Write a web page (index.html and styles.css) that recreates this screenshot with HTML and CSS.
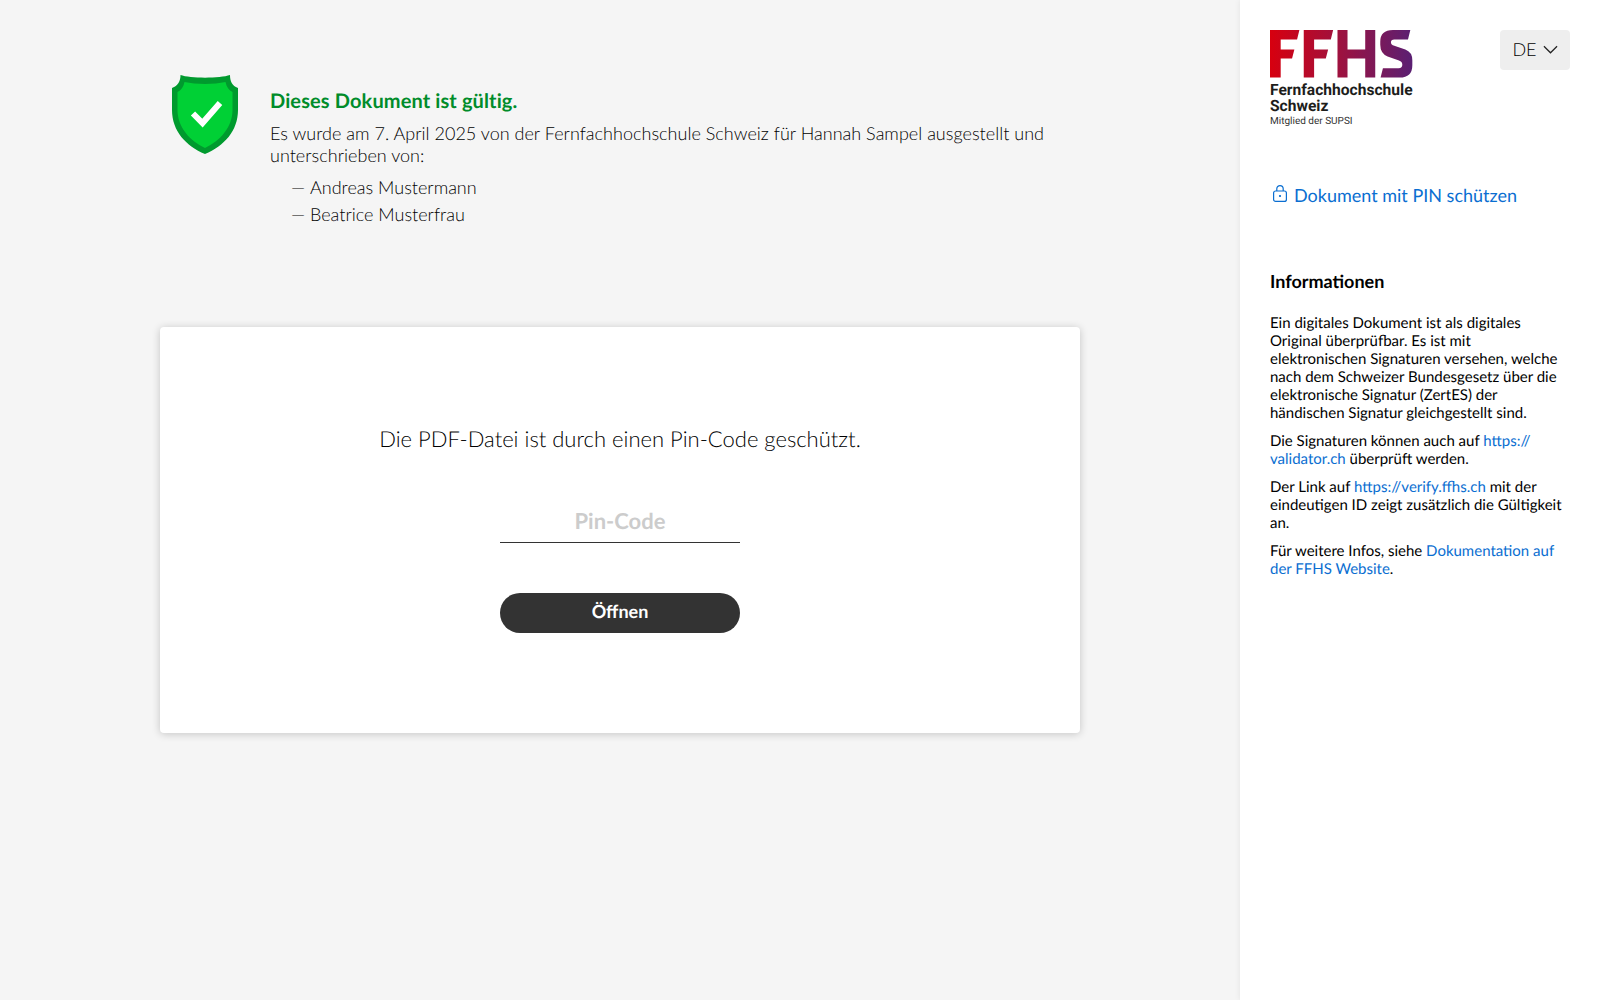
FILE: index.html
```html
<!DOCTYPE html>
<html lang="de">
<head>
<meta charset="utf-8">
<title>FFHS Verify</title>
<link rel="stylesheet" href="styles.css">
</head>
<body>
<main class="main">
  <section class="status">
    <svg class="shield" viewBox="0 0 66 79" aria-hidden="true">
      <path class="shield-outer" d="M8.500 0 C18 3.500 48 3.500 58 0 C58 6 60 11 66 13 L66 35 C66 56 52 71 33 79 C14 71 0 56 0 35 L0 13 C6 11 8.500 6 8.500 0 Z"/>
      <path class="shield-inner" d="M12.500 7 C24 9.500 42 9.500 53.500 7 C54.500 12 57 15.500 60.500 17 L60.500 35 C60.500 52 48 66 33 73 C18 66 5.500 52 5.500 35 L5.500 17 C9 15.500 11.500 12 12.500 7 Z"/>
      <path class="shield-check" d="M21 38.500 L30.500 48 L48 28"/>
    </svg>
    <div class="status-text">
      <h1 class="status-title">Dieses Dokument ist gültig.</h1>
      <p class="status-desc">Es wurde am 7. April 2025 von der Fernfachhochschule Schweiz für Hannah Sampel ausgestellt und unterschrieben von:</p>
      <ul class="signers">
        <li class="signer"><span class="dash">—</span>Andreas Mustermann</li>
        <li class="signer"><span class="dash">—</span>Beatrice Musterfrau</li>
      </ul>
    </div>
  </section>
  <section class="card">
    <p class="card-text">Die PDF-Datei ist durch einen Pin-Code geschützt.</p>
    <input class="pin" type="text" placeholder="Pin-Code" aria-label="Pin-Code">
    <button class="open" type="button">Öffnen</button>
  </section>
</main>
<aside class="side">
  <header class="side-head">
    <div class="logo">
      <svg class="logo-mark" viewBox="0 0 428 143" role="img" aria-label="FFHS">
        <defs>
          <linearGradient id="ffhs" gradientUnits="userSpaceOnUse" x1="0" y1="0" x2="428" y2="0">
            <stop offset="0" stop-color="#d7000f"/>
            <stop offset="0.5" stop-color="#9c1240"/>
            <stop offset="1" stop-color="#5a1f73"/>
          </linearGradient>
        </defs>
        <path fill="url(#ffhs)" d="M0 0 H88 L81 28 H32 V58 H73 L66 85 H32 V142 H0 Z"/>
        <path fill="url(#ffhs)" d="M101 0 H189 L182 28 H132 V58 H174 L167 85 H132 V142 H101 Z"/>
        <path fill="url(#ffhs)" d="M202 0 H232 V58 H285 V0 H315 V142 H285 V85 H232 V142 H202 Z"/>
        <path fill="url(#ffhs)" d="M420 0 L413 28 H372 Q362 28 362 36 Q362 44 372 47 L405 58 Q426 66 426 90 L426 105 Q426 142 388 142 L331 142 L338 114 L385 114 Q396 114 396 104 Q396 94 386 91 L352 79 Q330 70 330 44 L330 35 Q330 0 368 0 Z"/>
      </svg>
      <div class="logo-name">Fernfachhochschule<br>Schweiz</div>
      <div class="logo-sub">Mitglied der SUPSI</div>
    </div>
    <button class="lang" type="button">DE
      <svg class="chev" viewBox="0 0 16 9" aria-hidden="true"><path d="M1 1 L8 8 L15 1"/></svg>
    </button>
  </header>
  <a class="protect" href="#">
    <svg class="lock" viewBox="0 0 14 17" aria-hidden="true">
      <rect x="0.600" y="6" width="12.800" height="10.400" rx="2"/>
      <path d="M3.800 6 V3.800 A3.200 3.200 0 0 1 10.200 3.800 V6"/>
      <circle cx="7" cy="11" r="0.700"/>
    </svg>
    Dokument mit PIN schützen
  </a>
  <h2 class="info-title">Informationen</h2>
  <p class="info">Ein digitales Dokument ist als digitales Original überprüfbar. Es ist mit elektronischen Signaturen versehen, welche nach dem Schweizer Bundesgesetz über die elektronische Signatur (ZertES) der händischen Signatur gleichgestellt sind.</p>
  <p class="info">Die Signaturen können auch auf <a class="link" href="#">https://<br>validator.ch</a> überprüft werden.</p>
  <p class="info">Der Link auf <a class="link" href="#">https://verify.ffhs.ch</a> mit der eindeutigen ID zeigt zusätzlich die Gültigkeit an.</p>
  <p class="info">Für weitere Infos, siehe <a class="link" href="#">Dokumentation auf der FFHS Website</a>.</p>
</aside>
</body>
</html>
```
FILE: styles.css
```css
* { box-sizing: border-box; }
html, body { height: 100%; }
body {
  margin: 0;
  display: flex;
  height: 100vh;
  overflow: hidden;
  background: #f5f5f5;
  color: #000;
  font-family: Lato, "Liberation Sans", sans-serif;
  text-rendering: geometricPrecision;
}
.main {
  width: 1240px;
  flex: none;
  padding: 75px 160px 0;
}
.status {
  display: flex;
  align-items: flex-start;
  height: 252px;
  padding-left: 12px;
}
.shield { width: 66px; height: 79px; flex: none; margin-right: 32px; }
.shield-outer { fill: #009a2e; }
.shield-inner { fill: #00d035; }
.shield-check { fill: none; stroke: #fff; stroke-width: 6; }
.status-text { padding-top: 14px; width: 790px; }
.status-title {
  margin: 0 0 9px;
  font-size: 20px;
  line-height: 24px;
  font-weight: 700;
  letter-spacing: 0.120px;
  color: #008c2a;
}
.status-desc {
  margin: 0 0 8px;
  font-size: 18px;
  line-height: 22px;
  font-weight: 300;
  letter-spacing: 0.020px;
}
.signers { list-style: none; margin: 0; padding: 0 0 0 21px; }
.signer { font-size: 18px; line-height: 27px; font-weight: 300; }
.dash { display: inline-block; width: 19px; }
.card {
  height: 406px;
  background: #fff;
  border-radius: 4px;
  box-shadow: 0 1px 8px rgba(0, 0, 0, 0.2);
  display: flex;
  flex-direction: column;
  align-items: center;
  padding-top: 98px;
}
.card-text {
  margin: 0 0 46px;
  font-size: 22px;
  line-height: 28px;
  font-weight: 300;
}
.pin {
  width: 240px;
  height: 44px;
  border: 0;
  border-bottom: 1px solid #333;
  background: transparent;
  outline: 0;
  padding: 0;
  text-align: center;
  font: 700 22px Lato, "Liberation Sans", sans-serif;
  text-rendering: geometricPrecision;
  color: #333;
}
.pin::placeholder { color: #ccc; opacity: 1; }
.open {
  margin-top: 50px;
  width: 240px;
  height: 40px;
  border: 0;
  border-radius: 20px;
  background: #333;
  color: #fff;
  font: 700 18px Lato, "Liberation Sans", sans-serif;
  text-rendering: geometricPrecision;
  padding: 0 0 4px;
}
.side {
  flex: 1;
  background: #fff;
  box-shadow: 0 0 6px rgba(0, 0, 0, 0.08);
  padding: 30px 30px 0;
  color: #000;
}
.side-head {
  display: flex;
  justify-content: space-between;
  align-items: flex-start;
}
.logo { width: 143px; }
.logo-mark { display: block; width: 143px; height: 48px; }
.logo-name {
  margin-top: 4px;
  font: 700 15.600px/16px Roboto, sans-serif;
  color: #1d1d1b;
  white-space: nowrap;
}
.logo-sub {
  margin-top: 1px;
  font: 400 10px/13px Roboto, sans-serif;
  color: #333;
}
.lang {
  width: 70px;
  height: 40px;
  border: 0;
  border-radius: 4px;
  background: #eee;
  color: #000;
  font: 300 18px Lato, sans-serif;
  text-rendering: geometricPrecision;
  padding: 0 0 3px;
  display: flex;
  align-items: center;
  justify-content: center;
  gap: 6px;
}
.chev { width: 15px; height: 9px; margin-top: 2px; }
.chev path { fill: none; stroke: #222; stroke-width: 1.300; }
.protect {
  margin-top: 55px;
  display: flex;
  align-items: center;
  gap: 7px;
  font-size: 18px;
  line-height: 24px;
  color: #0a6ed1;
  text-decoration: none;
}
.lock { width: 14px; height: 17px; margin-left: 3px; margin-top: -3px; }
.lock rect, .lock path { fill: none; stroke: #0a6ed1; stroke-width: 1.200; }
.lock circle { fill: #0a6ed1; stroke: #0a6ed1; }
.info-title {
  margin: 62px 0 21px;
  font-size: 18px;
  line-height: 24px;
  font-weight: 700;
}
.info {
  margin: 0 0 10px;
  font-size: 15px;
  line-height: 18px;
}
.link { color: #0a6ed1; text-decoration: none; }
```
